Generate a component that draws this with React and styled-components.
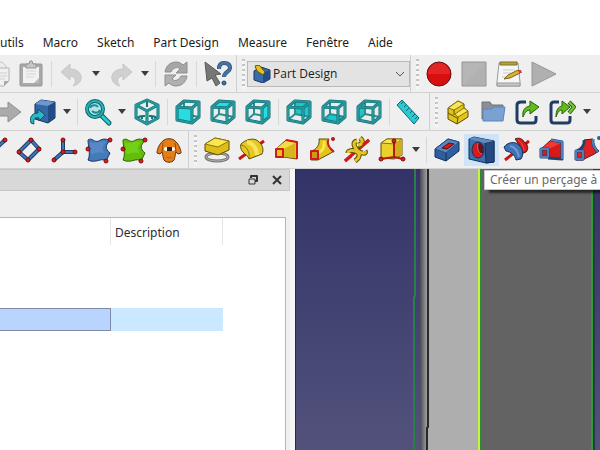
import React, { useState } from 'react';
import styled, { createGlobalStyle, css } from 'styled-components';

const GlobalStyle = createGlobalStyle`
    * { box-sizing: border-box; }
    body {
        margin: 0;
        overflow: hidden;
        background: #fff;
        color: #1c1c1c;
        font-family: "Noto Sans", "Open Sans", sans-serif;
        font-size: 12px;
        line-height: 16px;
    }
    button, select { font: inherit; color: inherit; }
`;

const Window = styled.div`
    display: flex;
    flex-direction: column;
    height: 100vh;
    overflow: hidden;
`;

const MenuBar = styled.nav`
    display: flex;
    flex: none;
    gap: 19px;
    padding: 34px 0 4px;
`;

const MenuItem = styled.button`
    height: 17px;
    padding: 0;
    border: 0;
    background: none;
    line-height: 16px;
    white-space: nowrap;
`;

const ToolRow = styled.div`
    display: flex;
    flex: none;
    height: 38px;
    overflow: hidden;
    background: #efefef;
    border-bottom: 1px solid #d2d2d2;
`;

const ToolGroup = styled.div`
    display: flex;
    align-items: center;
    flex: none;
    padding-right: ${p => p.$tight ? 0 : 2}px;
    margin-left: -${p => p.$cut || 0}px;
    border-right: 1px solid #cfcfcf;
    &:last-child { border-right: 0; }
`;

const Handle = styled.span`
    width: 3px;
    height: 30px;
    margin: 0 2px 0 5px;
    background: repeating-linear-gradient(#c4c4c4 0 2px, #f6f6f6 2px 5px);
`;

const Separator = styled.span`
    width: 1px;
    height: 26px;
    margin: 0 2px 0 3px;
    background: #d8d8d8;
`;

const ToolButton = styled.button`
    display: flex;
    align-items: center;
    justify-content: center;
    width: 35px;
    height: 32px;
    padding: 0;
    border: 0;
    background: none;
    ${p => p.$active && css`
        background: #cfe4f7;
    `}
    svg { width: 26px; height: 26px; overflow: visible; }
`;

const DropButton = styled.button`
    display: flex;
    align-items: center;
    justify-content: center;
    width: 14px;
    height: 32px;
    padding: 0;
    border: 0;
    background: none;
    svg { width: 8px; height: 5px; }
`;

const WorkbenchBox = styled.label`
    position: relative;
    display: flex;
    align-items: center;
    width: 163px;
    height: 26px;
    svg { position: absolute; pointer-events: none; }
    svg:first-child { left: 6px; width: 18px; height: 18px; }
    svg:last-child { right: 5px; width: 10px; height: 6px; }
`;

const WorkbenchSelect = styled.select`
    appearance: none;
    width: 100%;
    height: 26px;
    padding: 0 20px 0 25px;
    border: 1px solid #b9b9b9;
    border-radius: 0;
    background: #e3e3e3;
    font-family: "Open Sans", sans-serif;
`;

const Main = styled.main`
    display: flex;
    flex: 1;
    min-height: 0;
`;

const Dock = styled.section`
    display: flex;
    flex-direction: column;
    flex: none;
    width: 290px;
    background: #efefef;
`;

const DockTitle = styled.header`
    display: flex;
    flex: none;
    align-items: center;
    justify-content: flex-end;
    gap: 8px;
    height: 22px;
    padding-right: 4px;
    background: #d8d8d8;
    border: 1px solid #c6c6c6;
    border-left: 0;
`;

const TitleButton = styled.button`
    display: flex;
    align-items: center;
    justify-content: center;
    width: 16px;
    height: 16px;
    padding: 0;
    border: 0;
    background: none;
    svg { width: 10px; height: 10px; }
`;

const TreeFrame = styled.div`
    flex: 1;
    margin: 26px 4px 0 0;
    background: #fff;
    border: 1px solid #b4b8be;
    border-width: 1px 1px 0 0;
`;

const Tree = styled.table`
    width: 223px;
    table-layout: fixed;
    border-collapse: separate;
    border-spacing: 0;
`;

const HeadCell = styled.th`
    height: 27px;
    padding: 2px 4px 0;
    border-right: 1px solid #e4e4e4;
    font-weight: 400;
    text-align: left;
    vertical-align: middle;
    color: #2b2b38;
`;

const Cell = styled.td`
    height: 21px;
    padding: 0;
    ${p => p.$selected && css`
        height: 23px;
        background: #cce8ff;
    `}
    ${p => p.$current && css`
        background: #b9d4ff;
        border: 1px solid #7d8ba8;
        border-left: 0;
    `}
`;

const Splitter = styled.div`
    flex: none;
    width: 5px;
    background: #f6f6f6;
`;

const Viewport = styled.section`
    position: relative;
    display: flex;
    flex: 1;
    min-width: 0;
    overflow: hidden;
    background: #33336a;
    > svg { flex: 1; width: 100%; height: 100%; }
`;

const Tooltip = styled.div`
    position: absolute;
    top: 1px;
    left: 189px;
    right: -1px;
    height: 20px;
    padding: 1px 5px;
    border: 1px solid #c8c8c8;
    background: #fff;
    color: #6a6a6a;
    white-space: nowrap;
    box-shadow: 5px 3px 2px rgba(0, 0, 0, 0.6);
`;

const Svg = ({ size = 26, children, ...rest }) => (
    <svg viewBox={`0 0 ${size} ${size}`} fill="none" strokeLinejoin="round" aria-hidden="true" {...rest}>{children}</svg>
);

const Dots = ({ at, r = 2 }) => at.map(([x, y]) => (
    <circle key={`${x}-${y}`} cx={x} cy={y} r={r} fill="#e01b1b" stroke="#7a0c0c" strokeWidth="1" />
));

const FACES = {
    front: '2,8 17,9 17,24 2,21',
    top: '2,8 9,2 24,3 17,9',
    right: '17,9 24,3 24,18 17,24',
    rear: '9,2 24,3 24,18 9,15',
    bottom: '2,21 9,15 24,18 17,24',
    left: '2,8 9,2 9,15 2,21',
};

const ViewCube = ({ face }) => {
    const hiddenFace = ['rear', 'bottom', 'left'].includes(face);
    return (
        <Svg>
            <path d="M2 8 9 2 24 3 24 18 17 24 2 21Z" fill="#e6eeee" />
            {hiddenFace && <polygon points={FACES[face]} fill="#20c4ca" />}
            <path d="M9 2V15L2 21M9 15 24 18" stroke="#2f8d92" strokeWidth="2" />
            {!hiddenFace && <polygon points={FACES[face]} fill="#28dce2" />}
            <path d="M2 8 9 2 24 3 24 18 17 24 2 21ZM2 8 17 9 24 3M17 9V24" stroke="#106a6f" strokeWidth="3" />
            <path d="M2 8 9 2 24 3 24 18 17 24 2 21ZM2 8 17 9 24 3M17 9V24" stroke="#27969b" strokeWidth="2" />
        </Svg>
    );
};

const ICONS = {
    copy: (
        <Svg>
            <path d="M8 1H19L23 5V20H8Z" fill="#ececec" stroke="#c4c4c4" />
            <path d="M13 7H26V20L21 25H13Z" fill="#f0f0f0" stroke="#b4b4b4" />
            <path d="M15 12H24M15 15H24M15 18H22" stroke="#cfcfcf" />
            <path d="M26 20H21V25Z" fill="#a9a9a9" />
        </Svg>
    ),
    paste: (
        <Svg>
            <rect x="2" y="3" width="22" height="22" rx="1" fill="#a9a9a9" stroke="#949494" />
            <rect x="5" y="6" width="16" height="16" fill="#f1f1f1" />
            <path d="M8 10H18M8 13H18M8 16H16" stroke="#d5d5d5" />
            <path d="M8 3H11L12 0H14L15 3H18V7H8Z" fill="#c6c6c6" stroke="#949494" />
            <path d="M16 22 21 17V22Z" fill="#bababa" />
        </Svg>
    ),
    undo: (
        <Svg>
            <path d="M2 11 11 3V8C19 8 23 13 22 18C21 22 18 24 14 25C18 21 17 15 11 15V19Z" fill="#d0d0d0" stroke="#c6c6c6" />
        </Svg>
    ),
    redo: (
        <Svg>
            <path d="M24 11 15 3V8C7 8 3 13 4 18C5 22 8 24 12 25C8 21 9 15 15 15V19Z" fill="#d0d0d0" stroke="#c6c6c6" />
        </Svg>
    ),
    refresh: (
        <Svg>
            <path d="M2 11C3 5 7 1 13 1C16 1 18 2 20 4L24 1V12H13L17 8C14 5 10 7 8 11Z" fill="#a6a6a6" stroke="#8f8f8f" />
            <path d="M24 15C23 21 19 25 13 25C10 25 8 24 6 22L2 25V14H13L9 18C12 21 16 19 18 15Z" fill="#b0b0b0" stroke="#8f8f8f" />
        </Svg>
    ),
    whatsThis: (
        <Svg>
            <path d="M15 8C15 4 17 2 20 2C24 2 26 4 26 7C26 11 20 11 20 16" stroke="#25466f" strokeWidth="4" />
            <path d="M15 8C15 4 17 2 20 2C24 2 26 4 26 7C26 11 20 11 20 16" stroke="#48719f" strokeWidth="3" />
            <circle cx="20" cy="22" r="2" fill="#48719f" stroke="#25466f" />
            <path d="M1 1 17 13 11 14 16 22 12 25 8 17 3 20Z" fill="#777" stroke="#595959" />
        </Svg>
    ),
    record: (
        <Svg>
            <circle cx="13" cy="13" r="12" fill="#d90f0f" stroke="#641010" strokeWidth="1" />
            <path d="M2 13A11 11 0 0 1 24 13Z" fill="#e42525" />
        </Svg>
    ),
    stop: (
        <Svg>
            <rect x="1" y="1" width="24" height="24" fill="#b1b1b1" stroke="#969696" />
            <path d="M2 24V2H24Z" fill="#b6b6b6" />
        </Svg>
    ),
    macro: (
        <Svg>
            <path d="M3 2H22L24 21V25H1V21Z" fill="#f6f6f6" stroke="#9a9a9a" />
            <path d="M1 22H24V25H1Z" fill="#c8c8c8" stroke="#9a9a9a" />
            <path d="M4 1H21V4H4Z" fill="#b3a33b" stroke="#7e7325" />
            <path d="M7 9H19M7 12H15M6 16H10" stroke="#cdcdcd" />
            <path d="M8 18 12 14 22 9 24 12 14 17Z" fill="#d7b42c" stroke="#786523" />
            <path d="M22 9 25 9 26 12 24 12Z" fill="#d93a4a" />
        </Svg>
    ),
    play: <Svg><path d="M1 1 25 13 1 25Z" fill="#b0b0b0" stroke="#969696" /></Svg>,
    next: <Svg><path d="M-4 9H13V3L26 13 13 23V17H-4Z" fill="#ababab" stroke="#8f8f8f" /></Svg>,
    linkBox: (
        <Svg>
            <path d="M5 5 11 1 25 3V19L18 24 5 20Z" fill="#3566a7" stroke="#122f5c" />
            <path d="M5 5 11 1 25 3 18 7Z" fill="#6c9ad0" />
            <path d="M18 7 25 3V19L18 24Z" fill="#234b85" />
            <path d="M1 24C-1 17 3 14 8 14V10L15 16 9 22V19C5 18 3 20 4 25Z" fill="#2cb9c2" stroke="#08565d" />
        </Svg>
    ),
    zoomFit: (
        <Svg>
            <path d="M16 16 24 24" stroke="#0a5d62" strokeWidth="5" strokeLinecap="round" />
            <path d="M16 16 24 24" stroke="#25cbd1" strokeWidth="3" strokeLinecap="round" />
            <circle cx="10" cy="10" r="8" fill="#b5e2e3" stroke="#0d666b" strokeWidth="4" />
            <circle cx="10" cy="10" r="8" stroke="#28b3b9" strokeWidth="2" />
            <path d="M5 9C6 6 11 5 13 8M15 11C13 15 9 14 7 12" stroke="#178d93" strokeWidth="2" />
        </Svg>
    ),
    isometric: (
        <Svg>
            <path d="M13 1 24 6V19L13 25 2 19V6Z" fill="#e6eeee" />
            <path d="M13 2V8M7 17 3 19M19 17 23 19M8 20V17H11M18 20V17H15" stroke="#1a7479" strokeWidth="2" />
            <path d="M13 1 24 6V19L13 25 2 19V6ZM2 6 13 12 24 6M13 12V25" stroke="#106a6f" strokeWidth="3" />
            <path d="M13 1 24 6V19L13 25 2 19V6ZM2 6 13 12 24 6M13 12V25" stroke="#27969b" strokeWidth="2" />
        </Svg>
    ),
    front: <ViewCube face="front" />,
    top: <ViewCube face="top" />,
    right: <ViewCube face="right" />,
    rear: <ViewCube face="rear" />,
    bottom: <ViewCube face="bottom" />,
    left: <ViewCube face="left" />,
    measure: (
        <Svg>
            <path d="M0 6 5 1 22 19 17 25Z" fill="#27cbd3" stroke="#0b666b" />
            <path d="M6 3 4 5M9 6 7 8M12 9 9 12M15 12 13 14M18 15 15 18M20 18 18 20" stroke="#0b666b" />
        </Svg>
    ),
    part: (
        <Svg>
            <path d="M3 9 13 2 19 5V9L23 12V18L12 25 3 20Z" fill="#e2c51c" stroke="#5c4d06" />
            <path d="M3 9 13 2 19 5 9 11Z" fill="#fae755" stroke="#8a750d" />
            <path d="M10 15 19 9 23 12 13 18Z" fill="#fae755" stroke="#8a750d" />
            <path d="M9 11V16M3 14 12 19M13 18 12 25" stroke="#5c4d06" />
        </Svg>
    ),
    folder: (
        <Svg>
            <path d="M2 3H10L12 6H23V20H2Z" fill="#8b8f94" stroke="#717171" />
            <path d="M3 10H12L14 8H25L23 22H3Z" fill="#79a1d2" stroke="#5c86bb" />
        </Svg>
    ),
    link: (
        <Svg>
            <path d="M11 3H6Q2 3 2 6V21Q2 24 6 24H18Q21 24 21 21V17" stroke="#203c63" strokeWidth="3" />
            <path d="M8 18C7 11 10 8 15 7V2L24 8 15 15V11C12 11 10 13 8 18Z" fill="#60bd19" stroke="#285e08" />
        </Svg>
    ),
    linkGroup: (
        <Svg>
            <path d="M9 3H4Q1 3 1 6V21Q1 24 4 24H17Q20 24 20 21V17" stroke="#203c63" strokeWidth="3" />
            <path d="M19 3 24 8 19 14" stroke="#285e08" strokeWidth="4" />
            <path d="M19 3 24 8 19 14" stroke="#7bc936" strokeWidth="2" />
            <path d="M6 18C6 11 8 8 12 7V2L20 8 12 15V11C9 11 8 13 6 18Z" fill="#60bd19" stroke="#285e08" />
        </Svg>
    ),
    datumLine: (
        <Svg>
            <path d="M3 23 24 3" stroke="#1c3d6c" strokeWidth="4" />
            <path d="M3 23 24 3" stroke="#4375b3" strokeWidth="2" />
            <Dots at={[[3, 23], [24, 3]]} />
        </Svg>
    ),
    datumPlane: (
        <Svg>
            <path d="M15 3 23 12 12 23 3 15Z" stroke="#1c3d6c" strokeWidth="4" />
            <path d="M15 3 23 12 12 23 3 15Z" stroke="#4375b3" strokeWidth="2" />
            <Dots at={[[15, 3], [23, 12], [12, 23], [3, 15]]} />
        </Svg>
    ),
    datumAxes: (
        <Svg>
            <path d="M12 3V15H24M12 15 3 23" stroke="#1c3d6c" strokeWidth="4" />
            <path d="M12 3V15H24M12 15 3 23" stroke="#4375b3" strokeWidth="2" />
            <Dots at={[[12, 3], [12, 15], [24, 15], [3, 23]]} />
        </Svg>
    ),
    shapeBinder: (
        <Svg>
            <path d="M2 3C6 0 8 6 13 4C17 1 22 2 24 4C19 8 19 12 24 16L20 24C15 20 10 27 2 23C5 17 2 9 2 3Z" fill="#457ab9" stroke="#1a3763" />
            <path d="M4 5C9 8 15 2 20 5C16 9 16 13 19 17C13 13 7 18 5 17Z" fill="#5588c4" />
            <Dots at={[[24, 3], [2, 12], [20, 24]]} />
        </Svg>
    ),
    subShapeBinder: (
        <Svg>
            <path d="M2 3C6 0 8 6 13 4C17 1 22 2 24 4C19 8 19 12 24 16L20 24C15 20 10 27 2 23C5 17 2 9 2 3Z" fill="#62bd0c" stroke="#2d6206" />
            <path d="M4 5C9 8 15 2 20 5C16 9 16 13 19 17C13 13 7 18 5 17Z" fill="#74d016" />
            <Dots at={[[24, 3], [2, 12], [20, 24]]} />
        </Svg>
    ),
    clone: (
        <Svg>
            <path d="M7 4C9 1 17 1 19 4C22 6 25 12 25 16L22 17 20 15C19 18 19 21 18 23C16 26 10 26 8 23C7 21 7 18 6 15L4 17 1 16C1 12 4 6 7 4Z" fill="#e57e18" stroke="#653008" />
            <path d="M7 6 6 15M19 6 20 15" stroke="#9a4c0b" />
            <ellipse cx="10" cy="12" rx="2" ry="2" fill="#fff" />
            <ellipse cx="17" cy="12" rx="2" ry="2" fill="#fff" />
            <path d="M11 10H16V14H11Z" fill="#2b2018" />
            <path d="M10 20Q13 22 16 20" stroke="#b5620f" />
        </Svg>
    ),
    pad: (
        <Svg>
            <ellipse cx="13" cy="20" rx="11" ry="4" stroke="#747474" strokeWidth="3" />
            <ellipse cx="13" cy="20" rx="11" ry="4" stroke="#b5b5b5" strokeWidth="1" />
            <path d="M1 7 11 1 25 4V13L14 18 1 14Z" fill="#dfbd18" stroke="#584a05" />
            <path d="M1 7 11 1 25 4 14 10Z" fill="#fbe750" stroke="#8a750d" />
        </Svg>
    ),
    revolution: (
        <Svg>
            <path d="M0 22 25 4" stroke="#c51616" strokeWidth="3" />
            <path d="M2 7C6 3 14 0 19 4C24 8 25 13 23 17L10 22C9 18 6 18 4 15C2 13 1 10 2 7Z" fill="#e6c822" stroke="#5c4d06" />
            <path d="M8 5C14 6 18 12 18 18" stroke="#f7e45c" strokeWidth="4" />
            <path d="M2 8C8 9 11 15 10 22" stroke="#8a750d" />
        </Svg>
    ),
    loft: (
        <Svg>
            <path d="M2 12 12 3 23 5V22L9 20H2Z" fill="#e2c21d" stroke="#5c4d06" />
            <path d="M3 11 12 4 22 6 10 12Z" fill="#f4dd45" />
            <path d="M10 20V12L21 6V21Z" fill="#d7b51c" />
            <path d="M12 3 23 5V22M2 12H9V20H2Z" stroke="#d11a1a" strokeWidth="2" />
        </Svg>
    ),
    sweep: (
        <Svg>
            <path d="M10 2 20 2C18 7 20 11 25 14C19 18 14 20 9 23H2V14C8 13 11 7 10 2Z" fill="#e3c31c" stroke="#5c4d06" />
            <path d="M15 4C16 10 14 14 9 16" stroke="#f9e652" strokeWidth="3" />
            <path d="M2 14H9V22H2Z" fill="#c79d18" />
            <path d="M19 3C18 7 20 11 25 15M2 14H9V22H2Z" stroke="#d11a1a" strokeWidth="2" />
            <circle cx="24" cy="2" r="2" fill="#a42020" />
        </Svg>
    ),
    helix: (
        <Svg>
            <path d="M1 24 25 3" stroke="#d11a1a" strokeWidth="3" />
            <path d="M11 24C17 20 16 15 11 14C7 13 4 14 4 16M21 14C23 17 17 17 13 13C9 8 9 5 13 4M16 1C20 4 18 8 14 8" stroke="#5c4d06" strokeWidth="5" />
            <path d="M11 24C17 20 16 15 11 14C7 13 4 14 4 16M21 14C23 17 17 17 13 13C9 8 9 5 13 4M16 1C20 4 18 8 14 8" stroke="#e4c623" strokeWidth="3" />
            <path d="M1 24 7 19M19 8 25 3" stroke="#d11a1a" strokeWidth="3" />
        </Svg>
    ),
    primitive: (
        <Svg>
            <path d="M2 6 8 2H23V18L15 22 2 21Z" fill="#ecd12b" stroke="#5c4d06" />
            <path d="M2 6 8 2H23L16 7Z" fill="#fbe953" stroke="#8a750d" />
            <path d="M16 7 23 2V18L16 21Z" fill="#cfae19" />
            <path d="M15 5V20M2 22 15 20 24 22" stroke="#b51818" strokeWidth="2" />
            <Dots at={[[15, 4], [2, 22], [24, 22]]} />
        </Svg>
    ),
    pocket: (
        <Svg>
            <path d="M1 12 14 2 25 5V14L12 24 1 20Z" fill="#315e9d" stroke="#132e58" />
            <path d="M1 12 14 2 25 5 12 16Z" fill="#5886c0" stroke="#264d83" />
            <path d="M8 11 15 6 20 7 13 12Z" fill="#d51717" stroke="#650d0d" />
            <path d="M12 16V24" stroke="#132e58" />
        </Svg>
    ),
    hole: (
        <Svg>
            <path d="M0 2 5 0 25 4V25L17 26 0 22Z" fill="#3f70ae" stroke="#132e58" />
            <path d="M16 6 25 4V25L17 26Z" fill="#244a80" stroke="#132e58" />
            <path d="M0 2 5 0 25 4 16 6Z" fill="#5f8cc0" />
            <ellipse cx="9" cy="13" rx="6" ry="8" fill="#d81a1a" stroke="#14305a" />
            <path d="M9 6C13 6 15 9 14 13C14 15 14 16 13 17C9 16 8 10 9 6Z" fill="#5c1626" />
            <path d="M9 6C8 11 9 16 13 17" stroke="#ff5a50" />
        </Svg>
    ),
    groove: (
        <Svg>
            <path d="M1 23 25 4" stroke="#c51616" strokeWidth="3" />
            <path d="M11 2C15 0 19 2 20 5C24 7 25 12 22 15L17 17C17 10 14 6 11 2Z" fill="#d71b1b" stroke="#650d0d" />
            <path d="M0 10C4 5 11 4 15 8C19 12 20 17 17 22L12 23C11 18 7 15 2 14Z" fill="#3e73b3" stroke="#132e58" />
            <path d="M6 9C11 10 14 14 15 20" stroke="#6b9bd2" strokeWidth="2" />
            <path d="M14 3C18 6 20 10 20 14" stroke="#f4514b" strokeWidth="1" />
        </Svg>
    ),
    subLoft: (
        <Svg>
            <path d="M2 12 12 3 23 5V22L9 20H2Z" fill="#d61a1a" stroke="#650d0d" />
            <path d="M3 11 12 4 22 6 10 12Z" fill="#f03b34" />
            <path d="M12 3 23 5V22L9 21M2 12H9V20H2Z" stroke="#1f4474" strokeWidth="3" />
            <path d="M12 3 23 5V22M2 12H9V20H2Z" stroke="#4c7fbd" strokeWidth="2" />
        </Svg>
    ),
    subSweep: (
        <Svg>
            <path d="M10 3 19 2C18 6 20 10 25 14C18 19 13 20 9 23H2V14C8 13 11 7 10 3Z" fill="#e02121" stroke="#650d0d" />
            <path d="M19 2C18 7 20 11 24 15M2 14H9V22H2ZM10 3C11 7 8 12 3 14" stroke="#1f4474" strokeWidth="3" />
            <path d="M19 2C18 7 20 11 24 15M2 14H9V22H2Z" stroke="#4c7fbd" strokeWidth="2" />
            <circle cx="25" cy="1" r="2" fill="#315e9d" />
        </Svg>
    ),
};

// '|' draws a separator, a trailing 'v' entry the small drop-down arrow
const FILE_TOOLS = ['copy', 'paste', '|', 'undo', 'v', 'redo', 'v', '|', 'refresh', '|', 'whatsThis'];
const MACRO_TOOLS = ['record', 'stop', 'macro', 'play'];
const VIEW_TOOLS = ['next', 'linkBox', 'v', '|', 'zoomFit', 'v', 'isometric', '|', 'front', 'top', 'right', '|', 'rear', 'bottom', 'left', '|', 'measure'];
const STRUCTURE_TOOLS = ['part', 'folder', 'link', 'linkGroup', 'v'];
const DATUM_TOOLS = ['datumLine', 'datumPlane', 'datumAxes', 'shapeBinder', 'subShapeBinder', 'clone'];
const MODELING_TOOLS = ['pad', 'revolution', 'loft', 'sweep', 'helix', 'primitive', 'v', '|', 'pocket', 'hole', 'groove', 'subLoft', 'subSweep'];

const MENUS = ['utils', 'Macro', 'Sketch', 'Part Design', 'Measure', 'Fenêtre', 'Aide'];

const Tools = ({ items, active }) => items.map((item, i) => {
    if (item === '|') {
        return <Separator key={i} />;
    }
    if (item === 'v') {
        return (
            <DropButton key={i} aria-label={`${items[i - 1]} options`}>
                <svg viewBox="0 0 8 5"><path d="M0 0H8L4 5Z" fill="#3c3c3c" /></svg>
            </DropButton>
        );
    }
    return <ToolButton key={i} aria-label={item} $active={item === active}>{ICONS[item]}</ToolButton>;
});

const WorkbenchSelector = () => {
    const [workbench, setWorkbench] = useState('Part Design');

    return (
        <WorkbenchBox>
            <Svg size={18}>
                <path d="M1 6 8 2 17 5V14L10 18 1 15Z" fill="#3a6cab" stroke="#173765" />
                <path d="M10 8 17 5V14L10 18Z" fill="#244c85" />
                <path d="M2 1 6 0 12 7 10 10 4 6Z" fill="#e3c223" stroke="#65540a" />
            </Svg>
            <WorkbenchSelect aria-label="Workbench" value={workbench} onChange={e => setWorkbench(e.target.value)}>
                <option>Part Design</option>
                <option>Sketcher</option>
            </WorkbenchSelect>
            <svg viewBox="0 0 10 6" fill="none"><path d="M1 1 5 5 9 1" stroke="#555" /></svg>
        </WorkbenchBox>
    );
};

const ModelTree = () => (
    <TreeFrame>
        <Tree>
            <colgroup>
                <col width="111" />
                <col width="112" />
            </colgroup>
            <thead>
                <tr>
                    <HeadCell />
                    <HeadCell>Description</HeadCell>
                </tr>
            </thead>
            <tbody>
                {[0, 1, 2].map(n => <tr key={n}><Cell /><Cell /></tr>)}
                <tr>
                    <Cell $selected $current />
                    <Cell $selected />
                </tr>
            </tbody>
        </Tree>
    </TreeFrame>
);

const Scene = () => (
    <svg viewBox="0 0 305 281" preserveAspectRatio="xMinYMin slice" aria-hidden="true">
        <defs>
            <linearGradient id="sky" x2="0" y2="1">
                <stop stopColor="#333368" />
                <stop offset="1" stopColor="#52527c" />
            </linearGradient>
            <linearGradient id="edge">
                <stop stopColor="#4a4a56" />
                <stop offset="1" stopColor="#a0a0a0" />
            </linearGradient>
        </defs>
        <rect width="305" height="281" fill="url(#sky)" />
        <rect width="1" height="281" fill="#26265c" />
        <path d="M120 0V127L119 128V281" stroke="#2b7d49" strokeWidth="2" fill="none" />
        <rect x="125" width="7" height="281" fill="url(#edge)" />
        <rect x="132" width="53" height="281" fill="#aeaeae" />
        <path d="M133 0V258L132 259V281" stroke="#292929" strokeWidth="2" fill="none" />
        <rect x="183" width="2" height="281" fill="#c9f23a" />
        <rect x="185" width="1" height="281" fill="#2d8b31" />
        <rect x="186" width="110" height="281" fill="#636363" />
        <rect x="296" width="2" height="281" fill="#2f9c34" />
        <rect x="298" width="2" height="281" fill="#28394c" />
    </svg>
);

const App = () => (
    <Window>
        <GlobalStyle />
        <MenuBar>
            {MENUS.map(label => <MenuItem key={label}>{label}</MenuItem>)}
        </MenuBar>
        <ToolRow>
            <ToolGroup $cut={22}><Tools items={FILE_TOOLS} /></ToolGroup>
            <ToolGroup $tight><Handle /><WorkbenchSelector /></ToolGroup>
            <ToolGroup><Handle /><Tools items={MACRO_TOOLS} /></ToolGroup>
        </ToolRow>
        <ToolRow>
            <ToolGroup $cut={10}><Tools items={VIEW_TOOLS} /></ToolGroup>
            <ToolGroup><Handle /><Tools items={STRUCTURE_TOOLS} /></ToolGroup>
        </ToolRow>
        <ToolRow>
            <ToolGroup $cut={24}><Tools items={DATUM_TOOLS} /></ToolGroup>
            <ToolGroup><Handle /><Tools items={MODELING_TOOLS} active="hole" /></ToolGroup>
        </ToolRow>
        <Main>
            <Dock>
                <DockTitle>
                    <TitleButton aria-label="Float">
                        <Svg size={10}>
                            <path d="M3 3V1H9V6H7" stroke="#333" strokeWidth="2" />
                            <path d="M1 4H7V9H1Z" stroke="#333" strokeWidth="1" />
                        </Svg>
                    </TitleButton>
                    <TitleButton aria-label="Close">
                        <Svg size={10}><path d="M1 1 9 9M9 1 1 9" stroke="#333" strokeWidth="2" /></Svg>
                    </TitleButton>
                </DockTitle>
                <ModelTree />
            </Dock>
            <Splitter />
            <Viewport>
                <Scene />
                <Tooltip role="tooltip">Créer un perçage à</Tooltip>
            </Viewport>
        </Main>
    </Window>
);

export default App;
